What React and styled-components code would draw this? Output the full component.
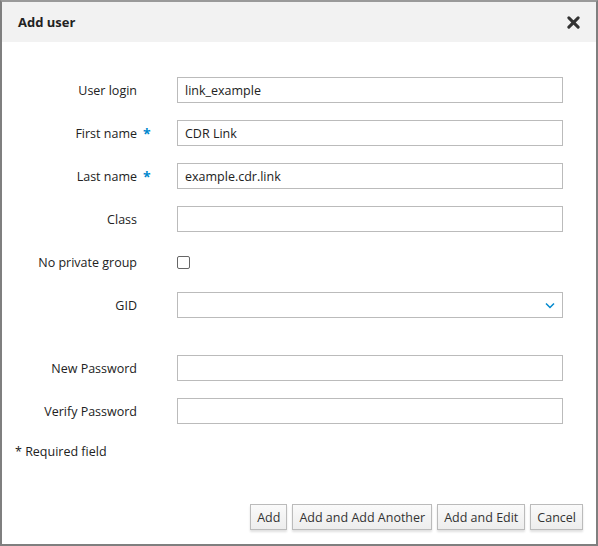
import React from "react";
import styled, { createGlobalStyle } from "styled-components";

const G = createGlobalStyle`
  html, body { margin: 0; padding: 0; background: #fff; }
  body { font-family: "Open Sans", "Liberation Sans", sans-serif; font-size: 13px; color: #222; }
`;
const Dialog = styled.div`
  box-sizing: border-box; width: 598px; height: 546px; border: 2px solid #7f7f7f;
  border-top-color: #9a9a9a; display: flex; flex-direction: column; background: #fff;
`;
const Header = styled.div`
  height: 40px; background: #f2f2f2; display: flex; align-items: center; justify-content: space-between;
  padding: 0 16px; font-weight: 700; font-size: 13px; color: #222;
`;
const Body = styled.div`
  flex: 1; padding: 35px 0 0 0; display: flex; flex-direction: column;
`;
const Form = styled.div`
  display: grid; grid-template-columns: 135px 40px 386px; row-gap: 17px; align-items: center;
`;
const Label = styled.div`
  text-align: right; font-size: 12.5px; color: #222;
`;
const Star = styled.span`
  color: #0088ce; font-weight: 700; padding-left: 6px; font-size: 14px;
`;
const Input = styled.div`
  box-sizing: border-box; height: 26px; border: 1px solid #bbb; padding: 0 7px; display: flex;
  align-items: center; justify-content: space-between; font-size: 12.5px; color: #222;
`;
const Check = styled.div`
  width: 11px; height: 11px; border: 1px solid #666; border-radius: 2px;
`;
const Spacer = styled.div` grid-column: 1 / -1; height: 3px; `;
const Req = styled.div` margin: 19px 0 0 13px; font-size: 12.5px; `;
const Footer = styled.div`
  display: flex; justify-content: flex-end; gap: 5px; padding: 0 13px 14px 0;
`;
const Btn = styled.button`
  font-family: inherit; font-size: 12.5px; color: #333; height: 26px; padding: 0 6px;
  border: 1px solid #bbb; background: linear-gradient(#fafafa, #ededed);
  box-shadow: 0 2px 2px rgba(0,0,0,0.12);
`;

const rows = [
  ["User login", false, "link_example"],
  ["First name", true, "CDR Link"],
  ["Last name", true, "example.cdr.link"],
  ["Class", false, ""],
];

export default function App() {
  return (
    <>
      <G />
      <Dialog>
        <Header>
          <span>Add user</span>
          <svg width="13" height="13" viewBox="0 0 14 14">
            <path d="M2 2 L12 12 M12 2 L2 12" stroke="#333" strokeWidth="3.2" strokeLinecap="round" />
          </svg>
        </Header>
        <Body>
          <Form>
            {rows.map(([l, r, v]) => (
              <React.Fragment key={l}>
                <Label>{l}</Label>
                <div>{r && <Star>*</Star>}</div>
                <Input>{v}</Input>
              </React.Fragment>
            ))}
            <Label>No private group</Label><div />
            <div style={{ height: 26, display: "flex", alignItems: "center" }}><Check /></div>
            <Label>GID</Label><div />
            <Input>
              <span />
              <svg width="10" height="7" viewBox="0 0 10 7"><path d="M1 1.5 L5 5.5 L9 1.5" stroke="#0088ce" strokeWidth="1.5" fill="none" /></svg>
            </Input>
            <Spacer />
            <Label>New Password</Label><div /><Input />
            <Label>Verify Password</Label><div /><Input />
          </Form>
          <Req>* Required field</Req>
        </Body>
        <Footer>
          <Btn>Add</Btn>
          <Btn>Add and Add Another</Btn>
          <Btn>Add and Edit</Btn>
          <Btn>Cancel</Btn>
        </Footer>
      </Dialog>
    </>
  );
}
